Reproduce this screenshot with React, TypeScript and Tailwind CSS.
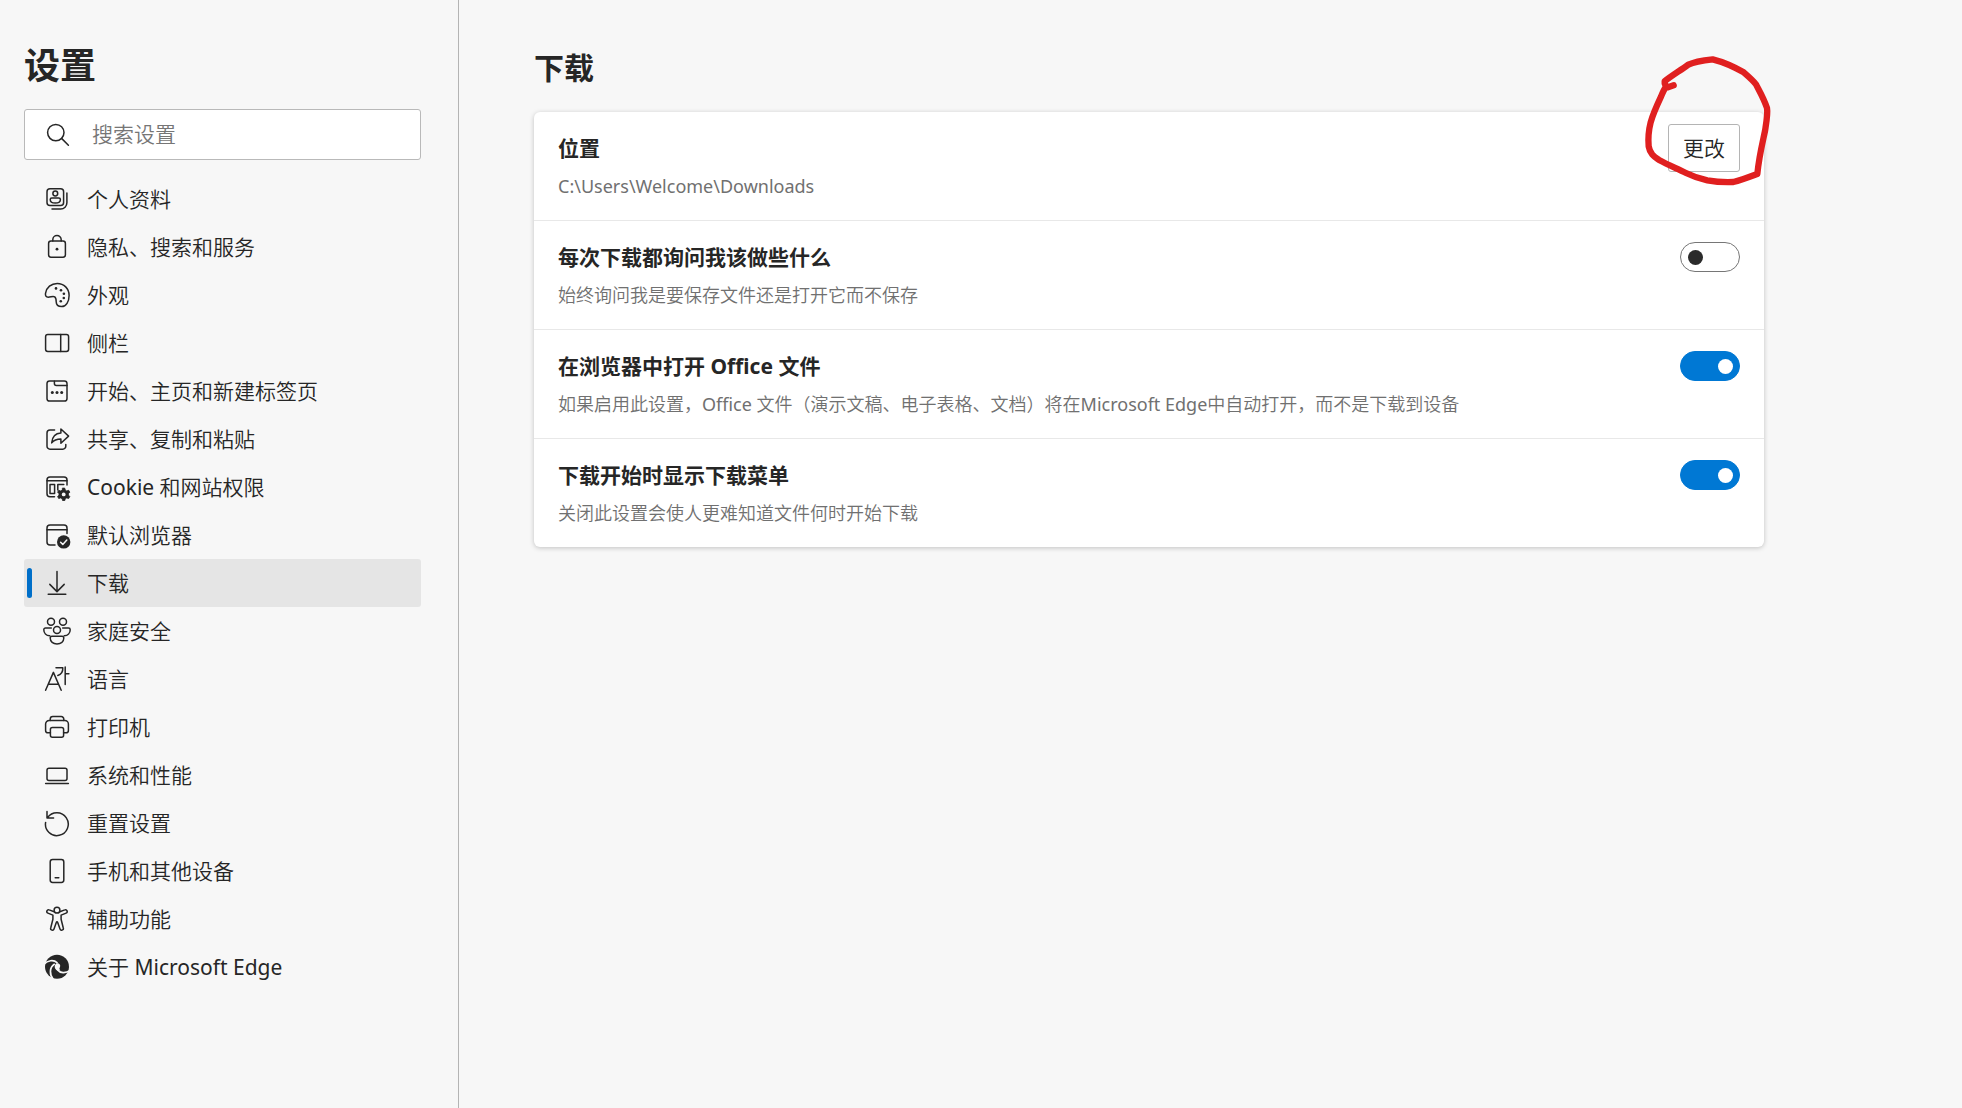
import React, { useState } from 'react'

const Icon = ({ children }: { children: React.ReactNode }) => (
  <svg viewBox="0 0 28 28" className="size-7 shrink-0" fill="none" stroke="currentColor" strokeWidth="1.5" strokeLinecap="round" strokeLinejoin="round" aria-hidden="true">
    {children}
  </svg>
)

const icons: Record<string, React.ReactNode> = {
  profile: (
    <>
      <rect x="4" y="3.8" width="16.6" height="16.6" rx="3" />
      <circle cx="12.3" cy="8.5" r="2.4" />
      <path d="M8.8 12.9h7a1.6 1.6 0 0 1 1.6 1.6c0 2.3-2.1 3.6-5.1 3.6s-5.1-1.3-5.1-3.6a1.6 1.6 0 0 1 1.6-1.6z" />
      <path d="M23.9 8v9.8a6.2 6.2 0 0 1-6.2 6.2H9" />
    </>
  ),
  lock: (
    <>
      <rect x="5.6" y="8" width="16.8" height="16.2" rx="2.4" />
      <path d="M9.8 8V6.8a4.2 4.2 0 0 1 8.4 0V8" />
      <circle cx="14" cy="16.2" r="1.4" fill="currentColor" stroke="none" />
    </>
  ),
  palette: (
    <>
      <path d="M5.2 16.3C3 16.3 2.2 14.6 2.5 12.3 3.4 6.4 8.3 2.4 14.2 2.4c6.8 0 11.9 5.2 11.9 12 0 6.2-3 11.2-7.4 11.2-3.4 0-5.5-1.6-5.5-4.8 0-1.6 0-3.8-1.5-4.9-1.9-1.2-3.8.4-6.5.4z" />
      <g fill="currentColor" stroke="none">
        <circle cx="13" cy="7.4" r="1.3" />
        <circle cx="18" cy="9.2" r="1.3" />
        <circle cx="20.9" cy="12.8" r="1.3" />
        <circle cx="20.8" cy="17" r="1.3" />
        <circle cx="17.8" cy="20.2" r="1.3" />
      </g>
    </>
  ),
  sidebar: (
    <>
      <rect x="2.6" y="5.6" width="23" height="16.8" rx="2.2" />
      <path d="M17.7 5.6v16.8" />
    </>
  ),
  start: (
    <>
      <rect x="4" y="4" width="20" height="20" rx="2.6" />
      <path d="M11.4 4.2v2.4a2 2 0 0 0 2 2H24" />
      <g fill="currentColor" stroke="none">
        <circle cx="9.3" cy="15.4" r="1.5" />
        <circle cx="14" cy="15.4" r="1.5" />
        <circle cx="18.7" cy="15.4" r="1.5" />
      </g>
    </>
  ),
  share: (
    <>
      <path d="M11.6 5H7a3 3 0 0 0-3 3v13.2a3 3 0 0 0 3 3h12.8a3 3 0 0 0 3-3v-1.8" />
      <path d="M17.9 4l7.7 7.1-7.7 7.1v-4.2c-4 0-6.9 1-9.2 3.9.5-5.7 3.5-9.5 9.2-9.8z" />
    </>
  ),
  cookie: (
    <>
      <path d="M11.5 23.8H7a3 3 0 0 1-3-3V7a3 3 0 0 1 3-3h14a3 3 0 0 1 3 3v5" />
      <path d="M4 7.8h20" />
      <rect x="7" y="11.4" width="4.6" height="9" />
      <path d="M14.8 17v-5.6h6" />
      <path d="M19.7 15.1h2l.6 2 1.4.8 2-.6 1.1 1.9-1.4 1.5v1.4l1.4 1.5-1.1 1.9-2-.6-1.4.8-.6 2h-2l-.6-2-1.4-.8-2 .6-1.1-1.9 1.4-1.5v-1.4l-1.4-1.5 1.1-1.9 2 .6 1.4-.8z" fill="currentColor" strokeWidth="0.8" />
      <circle cx="20.7" cy="21.4" r="1.9" fill="#f7f7f7" stroke="none" />
    </>
  ),
  browser: (
    <>
      <path d="M12 24H7a3 3 0 0 1-3-3V7a3 3 0 0 1 3-3h14a3 3 0 0 1 3 3v5.5" />
      <path d="M4 8.8h20" />
      <circle cx="20.7" cy="20.9" r="6.7" fill="currentColor" stroke="none" />
      <path d="M17.6 21.2l2.2 2.2 4-4.3" stroke="#f7f7f7" />
    </>
  ),
  download: <path d="M14 2.4v20M6.8 15.4l7.2 7.2 7.2-7.2M5.2 25.2h17.6" />,
  family: (
    <>
      <circle cx="8" cy="4.8" r="3.5" />
      <circle cx="20" cy="4.8" r="3.5" />
      <circle cx="14" cy="13" r="3.5" />
      <path d="M8.3 11H2.5A1.7 1.7 0 0 0 .8 12.7C.8 16 3.2 18.6 6.8 18.8M19.7 11h5.8a1.7 1.7 0 0 1 1.7 1.7c0 3.3-2.4 5.9-6 6.1" />
      <path d="M9 19.3h10a1.8 1.8 0 0 1 1.8 1.8c0 3.5-2.9 5.9-6.8 5.9s-6.8-2.4-6.8-5.9A1.8 1.8 0 0 1 9 19.3z" />
    </>
  ),
  language: (
    <>
      <path d="M2.6 25.2L10.4 7.4l7.8 17.8M5.2 19.2h10.4" />
      <path d="M13 2.8h6.8c.2 4.2-1.6 6.7-5 7.6M22.2 2v17.6M22.2 8.7h3.7" />
    </>
  ),
  printer: (
    <>
      <path d="M7.2 7.4V6.2a2.6 2.6 0 0 1 2.6-2.6h8.4a2.6 2.6 0 0 1 2.6 2.6v1.2" />
      <path d="M7.4 19.8H5a2.4 2.4 0 0 1-2.4-2.4V11A3.6 3.6 0 0 1 6.2 7.4h15.6a3.6 3.6 0 0 1 3.6 3.6v6.4a2.4 2.4 0 0 1-2.4 2.4h-2.4" />
      <rect x="7.4" y="14.4" width="13.2" height="9.8" rx="2" />
    </>
  ),
  laptop: (
    <>
      <rect x="4" y="7.2" width="20" height="12.4" rx="2" />
      <path d="M2.6 22.5h22.8" />
    </>
  ),
  reset: <path d="M4 2.4v6.5h6.6M4.5 8.7A11.4 11.4 0 1 1 2.6 13.4" />,
  phone: (
    <>
      <rect x="7.2" y="2.6" width="13.6" height="22.8" rx="2.4" />
      <path d="M12.2 20.8h3.6" />
    </>
  ),
  accessibility: (
    <>
      <circle cx="14" cy="5.2" r="2.9" />
      <path d="M11.2 6.8L6.2 4.9a1.7 1.7 0 0 0-1.3 3.2l5 2v4.2L7.7 23a1.7 1.7 0 0 0 3.3 1l2.4-6.8c.2-.6 1-.6 1.2 0L17 24a1.7 1.7 0 0 0 3.3-1l-2.2-8.7v-4.2l5-2a1.7 1.7 0 0 0-1.3-3.2l-5 1.9" />
    </>
  ),
  edge: (
    <>
      <circle cx="14" cy="13.8" r="12" fill="currentColor" stroke="none" />
      <g stroke="#f7f7f7" strokeWidth="1.7">
        <path d="M1 11.2C4.5 7.3 10.7 6.4 14 9.6" />
        <path d="M10.2 26.2C6.3 21.5 6.4 14.5 11.3 11.3" />
        <path d="M26.8 17.6c-4.1 2.9-9.9 2.5-12.2-.6-1.3-1.8-.6-3.4.2-4.6" />
      </g>
      <path d="M13.2 10.4c3-.5 4.8 1.6 3.7 3.9-.8 1.4-.5 2.4.7 3.1-3.1.7-5.7-.9-5.9-3.5 0-1.4.5-2.6 1.5-3.5z" fill="#f7f7f7" stroke="none" />
    </>
  ),
}

const navItems = [
  { icon: 'profile', label: '个人资料' },
  { icon: 'lock', label: '隐私、搜索和服务' },
  { icon: 'palette', label: '外观' },
  { icon: 'sidebar', label: '侧栏' },
  { icon: 'start', label: '开始、主页和新建标签页' },
  { icon: 'share', label: '共享、复制和粘贴' },
  { icon: 'cookie', label: 'Cookie 和网站权限' },
  { icon: 'browser', label: '默认浏览器' },
  { icon: 'download', label: '下载' },
  { icon: 'family', label: '家庭安全' },
  { icon: 'language', label: '语言' },
  { icon: 'printer', label: '打印机' },
  { icon: 'laptop', label: '系统和性能' },
  { icon: 'reset', label: '重置设置' },
  { icon: 'phone', label: '手机和其他设备' },
  { icon: 'accessibility', label: '辅助功能' },
  { icon: 'edge', label: '关于 Microsoft Edge' },
]

const toggles = [
  { id: 'ask', title: '每次下载都询问我该做些什么', desc: '始终询问我是要保存文件还是打开它而不保存', on: false },
  { id: 'office', title: '在浏览器中打开 Office 文件', desc: '如果启用此设置，Office 文件（演示文稿、电子表格、文档）将在Microsoft Edge中自动打开，而不是下载到设备', on: true },
  { id: 'menu', title: '下载开始时显示下载菜单', desc: '关闭此设置会使人更难知道文件何时开始下载', on: true },
]

// regular Latin with a thinner Chinese face for body text
const bodyFont = "font-['Noto_Sans','Noto_Sans_CJK_SC_DemiLight','Noto_Sans_CJK_SC',sans-serif]"

function Sidebar() {
  const [active, setActive] = useState('download')

  return (
    <aside className="w-[459px] shrink-0 border-r border-[#b4b4b4] pl-6 pr-[37px] pt-10">
      <h1 className="text-4xl leading-[52px] font-bold">设置</h1>
      <label className="mt-[17px] flex h-[51px] items-center rounded-[3px] border border-[#b9b9b9] bg-white pl-[19px]">
        <svg viewBox="0 0 28 28" className="size-7 shrink-0" fill="none" stroke="currentColor" strokeWidth="1.5" strokeLinecap="round" aria-hidden="true">
          <circle cx="11.8" cy="11.6" r="8.2" />
          <path d="M17.8 17.6l6.6 6.6" />
        </svg>
        <input type="search" placeholder="搜索设置" aria-label="搜索设置" className={`ml-5 min-w-0 flex-1 bg-transparent pb-0.5 text-[21px] leading-7 outline-none placeholder:text-[#767676] ${bodyFont}`} />
      </label>
      <nav className="mt-[15px]">
        {navItems.map(item => (
          <a
            key={item.icon}
            href={`#${item.icon}`}
            onClick={() => setActive(item.icon)}
            aria-current={active === item.icon ? 'page' : undefined}
            className={`flex h-12 items-center rounded-[3px] pl-[3px] ${active === item.icon ? 'bg-[#e5e5e5]' : ''}`}
          >
            <span className={`h-[30px] w-[5px] rounded-full ${active === item.icon ? 'bg-[#006fc9]' : ''}`} />
            <span className="ml-[11px] flex items-center gap-4">
              <Icon>{icons[item.icon]}</Icon>
              <span className={`text-[21px] leading-7 ${bodyFont}`}>{item.label}</span>
            </span>
          </a>
        ))}
      </nav>
    </aside>
  )
}

function Row({ title, desc, htmlFor, children }: { title: string; desc: string; htmlFor?: string; children: React.ReactNode }) {
  return (
    <div className="flex items-start justify-between gap-6 px-6 pt-[21px] pb-5">
      <div className="min-w-0">
        {htmlFor ? <label htmlFor={htmlFor} className="block text-[21px] leading-[30px] font-bold">{title}</label> : <h3 className="text-[21px] leading-[30px] font-bold">{title}</h3>}
        <p className={`mt-2.5 text-lg leading-[27px] text-[#707070] ${bodyFont}`}>{desc}</p>
      </div>
      {children}
    </div>
  )
}

export default function App() {
  const [values, setValues] = useState<Record<string, boolean>>(Object.fromEntries(toggles.map(t => [t.id, t.on])))

  return (
    <div className="flex min-h-screen bg-[#f7f7f7] font-['Noto_Sans','Noto_Sans_CJK_SC',sans-serif] text-[#262626]">
      <Sidebar />
      <main className="min-w-0 flex-1 pl-[75px] pr-6 pt-[46px]">
        <h2 className="text-3xl leading-[44px] font-bold">下载</h2>
        <section className="mt-[22px] max-w-[1230px] divide-y divide-[#e8e8e8] rounded-md bg-white shadow-[0_1px_5px_rgba(0,0,0,0.22)]">
          <Row title="位置" desc="C:\Users\Welcome\Downloads">
            <div className="relative -mt-[9px] -mb-3 shrink-0">
              <button className={`h-12 rounded-[3px] border border-[#b4b4b4] bg-white px-3.5 text-[21px] leading-7 ${bodyFont}`}>更改</button>
              {/* hand-drawn marker around the button */}
              <svg viewBox="72 45 384 396" className="pointer-events-none absolute -left-6 -top-[69px] h-[132px] w-32 max-w-none" fill="none" stroke="#e01f1f" strokeWidth="19" strokeLinecap="round" strokeLinejoin="round" aria-hidden="true">
                <path d="M161 136L144 142C137 138 133 132 134 124C155 107 179 93 205 74C225 64 250 61 278 58C310 66 340 79 371 97C386 110 397 119 408 133C418 153 430 172 441 204C444 220 440 241 435 273C426 315 417 350 412 402C388 411 365 420 340 426C317 427 290 426 262 421C238 416 218 409 198 399C172 386 145 375 117 360C103 350 90 342 86 319C84 297 85 275 92 247C99 222 108 202 123 170C129 155 133 146 139 139" />
              </svg>
            </div>
          </Row>
          {toggles.map(t => (
            <Row key={t.id} title={t.title} desc={t.desc} htmlFor={t.id}>
              <input
                id={t.id}
                type="checkbox"
                role="switch"
                checked={values[t.id]}
                onChange={e => setValues(prev => ({ ...prev, [t.id]: e.target.checked }))}
                className="flex h-[30px] w-[60px] shrink-0 appearance-none items-center rounded-full border border-[#767676] bg-white px-[7px] before:size-[15px] before:rounded-full before:bg-[#2b2b2b] checked:justify-end checked:border-[#0078d4] checked:bg-[#0078d4] checked:pr-1.5 checked:before:bg-white"
              />
            </Row>
          ))}
        </section>
      </main>
    </div>
  )
}
